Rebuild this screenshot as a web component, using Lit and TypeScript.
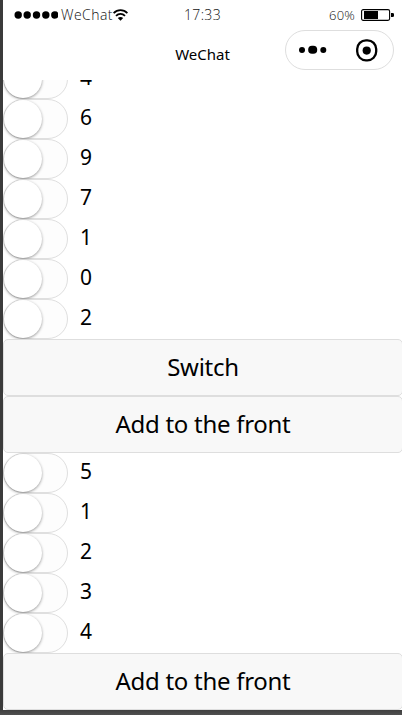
import { LitElement, html, css } from "lit";
import { customElement, property } from "lit/decorators.js";

@customElement("switch-row")
class SwitchRow extends LitElement {
  @property() label = "";
  static styles = css`
    :host { display: flex; height: 40px; flex: none; }
    .track {
      box-sizing: border-box; width: 65px; height: 40px; border: 1px solid #dfdfdf;
      border-radius: 20px; background: #fdfdfd; display: flex; flex: none;
    }
    .knob {
      width: 38px; height: 38px; border-radius: 50%; background: #fff;
      box-shadow: 0 1px 3px rgba(0, 0, 0, 0.4);
    }
    .label { margin-left: 12px; line-height: 37px; font-size: 21px; }
  `;
  render() {
    return html`<div class="track"><div class="knob"></div></div><span class="label">${this.label}</span>`;
  }
}

@customElement("wide-button")
class WideButton extends LitElement {
  @property() label = "";
  static styles = css`
    :host { display: block; flex: none; height: 57px; }
    .button {
      box-sizing: border-box; width: calc(100% + 1px); height: 57px; padding: 0 0 2px; margin: 0; display: block;
      border: 1px solid #dedede; border-radius: 5px; background: #f8f8f8; color: #000;
      font-family: inherit; font-size: 24px; line-height: 53px; letter-spacing: -0.28px; text-align: center;
    }
  `;
  render() {
    return html`<button class="button">${this.label}</button>`;
  }
}

@customElement("app-root")
class AppRoot extends LitElement {
  static styles = css`
    :host {
      display: block; box-sizing: border-box; width: 402px; height: 715px; overflow: hidden;
      padding: 0 0 5px 3px; background: linear-gradient(#3b3b3b, #3b3b3b 710px, #404040 710px, #505050);
      color: #000; font-family: "Segoe UI", "Noto Sans", "Open Sans", sans-serif;
    }
    .screen { height: 710px; background: #fff; display: flex; flex-direction: column; }
    .status {
      display: grid; grid-template-columns: 1fr auto 1fr; height: 29px; align-items: center;
      color: #111; font-family: "Segoe UI", "Open Sans", sans-serif; font-size: 14px; font-weight: 300; line-height: 28px;
    }
    .carrier { display: flex; align-items: center; padding-left: 11px; }
    .name { margin-left: 3px; letter-spacing: 0.45px; }
    .time { letter-spacing: 0.35px; }
    .power { display: flex; align-items: center; justify-content: flex-end; padding-right: 8px; gap: 6px; font-size: 13px; letter-spacing: 0.2px; }
    svg { display: block; flex: none; }
    .nav { height: 51px; display: grid; grid-template-columns: 1fr auto 1fr; }
    .title { grid-column: 2; font-size: 15px; line-height: 50px; }
    .capsule { box-sizing: border-box; justify-self: end; width: 109px; height: 40px; margin: 1px 8px 0 0; border: 1px solid #dedede; border-radius: 20px; }
    .content { flex: 1; min-height: 0; overflow: hidden; display: flex; flex-direction: column; justify-content: flex-end; }
  `;
  private rows(values: number[]) {
    return values.map((v) => html`<switch-row label=${v}></switch-row>`);
  }
  render() {
    return html`
      <div class="screen">
        <div class="status">
          <div class="carrier">
            <svg width="44" height="8" viewBox="0 0 44 8">
              <circle cx="4.2" cy="4" r="3.7"/><circle cx="13.2" cy="4" r="3.7"/><circle cx="22.5" cy="4" r="3.7"/><circle cx="31.8" cy="4" r="3.7"/><circle cx="40.8" cy="4" r="3.7"/>
            </svg>
            <span class="name">WeChat</span>
            <svg width="15" height="12" viewBox="0 0 15 12" fill="none" stroke="#000" stroke-width="1.8">
              <path d="M.6 4.1C4.5.1 10.5.1 14.4 4.1M3 6.8C5.6 4.2 9.4 4.2 12 6.8"/>
              <path d="M4.8 9Q7.5 7 10.2 9L7.5 11.7Z" fill="#000" stroke="none"/>
            </svg>
          </div>
          <span class="time">17:33</span>
          <div class="power">
            <span>60%</span>
            <svg width="33" height="12" viewBox="0 0 33 12">
              <rect x=".6" y=".6" width="28" height="10.8" rx="1.6" fill="none" stroke="#000" stroke-width="1.1"/>
              <rect x="3" y="2" width="14" height="8"/><path d="M30 4h1.5q1.5 0 1.5 1.3v1.4q0 1.3-1.5 1.3H30z"/>
            </svg>
          </div>
        </div>
        <div class="nav">
          <span class="title">WeChat</span>
          <div class="capsule">
            <svg width="107" height="38" viewBox="0 0 107 38">
              <circle cx="16" cy="19" r="3"/><rect x="22.2" y="14.8" width="9" height="8" rx="3.8"/><circle cx="37.3" cy="19" r="3"/>
              <rect x="71.2" y="9.3" width="19" height="20" rx="8.8" fill="none" stroke="#000" stroke-width="2.3"/>
              <circle cx="80.7" cy="19.6" r="4.1"/>
            </svg>
          </div>
        </div>
        <div class="content">
          ${this.rows([4, 6, 9, 7, 1, 0, 2])}
          <wide-button label="Switch"></wide-button>
          <wide-button label="Add to the front"></wide-button>
          ${this.rows([5, 1, 2, 3, 4])}
          <wide-button label="Add to the front"></wide-button>
        </div>
      </div>
    `;
  }
}
